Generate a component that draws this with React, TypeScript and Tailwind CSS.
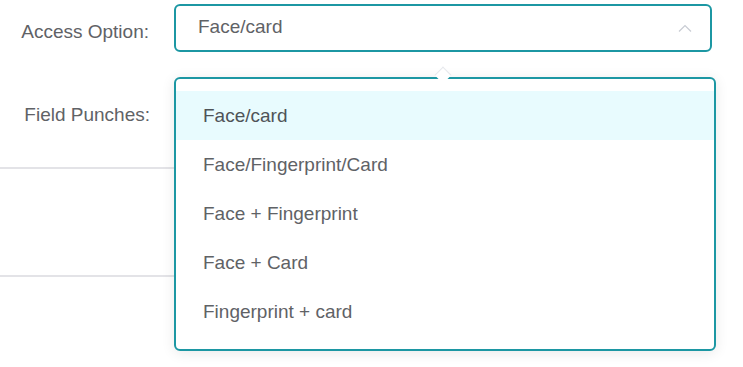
import React from 'react';

const options = ['Face/card', 'Face/Fingerprint/Card', 'Face + Fingerprint', 'Face + Card', 'Fingerprint + card'];

const ChevronUp = () => (
  <svg width="14" height="8" viewBox="0 0 14 8" fill="none">
    <path d="M1 7.5L7 1.5L13 7.5" stroke="#c8ccd3" strokeWidth="1.2" />
  </svg>
);

export default function App() {
  const selected = 'Face/card';

  return (
    <div className="relative w-[743px] h-[367px] overflow-hidden bg-white font-['Liberation_Sans',Arial,sans-serif] text-[19px] text-[#5f6266]">
      {/* 첫 번째 행: 선택 박스 */}
      <div className="flex items-center pt-[4px]">
        <div className="w-[150px] pr-[1px] text-right leading-[24px] pt-[7px]">Access Option:</div>
        <div className="ml-[24px] flex h-[48px] w-[538px] items-center justify-between rounded-[6px] border-2 border-[#1c97a3] pl-[22px] pr-[18px]">
          <span className="leading-[24px] -mt-[2px]">{selected}</span>
          <ChevronUp />
        </div>
      </div>

      {/* 두 번째 행 */}
      <div className="h-[117px] w-[560px] border-b-2 border-[#e3e3e7] pt-[51px]">
        <div className="w-[150px] text-right leading-[24px]">Field Punches:</div>
      </div>
      <div className="h-[108px] w-[560px] border-b-2 border-[#e3e3e7]" />

      {/* 드롭다운 */}
      <div className="absolute left-[174px] top-[77px] h-[274px] w-[542px] rounded-[6px] border-2 border-[#1c97a3] bg-white py-[12px] shadow-[0_2px_14px_rgba(0,0,0,0.09)]">
        <ul>
          {options.map((opt, i) => (
            <li
              key={opt}
              className={`flex h-[49px] items-center pl-[27px] leading-[24px] ${i === 0 ? 'bg-[#e8fbfe] text-[#4f5358]' : ''}`}
            >
              {opt}
            </li>
          ))}
        </ul>
      </div>
      <div className="absolute left-[437px] top-[69px] h-[12px] w-[12px] rotate-45 border-l border-t border-[#e6e8ec] bg-white" />
    </div>
  );
}
